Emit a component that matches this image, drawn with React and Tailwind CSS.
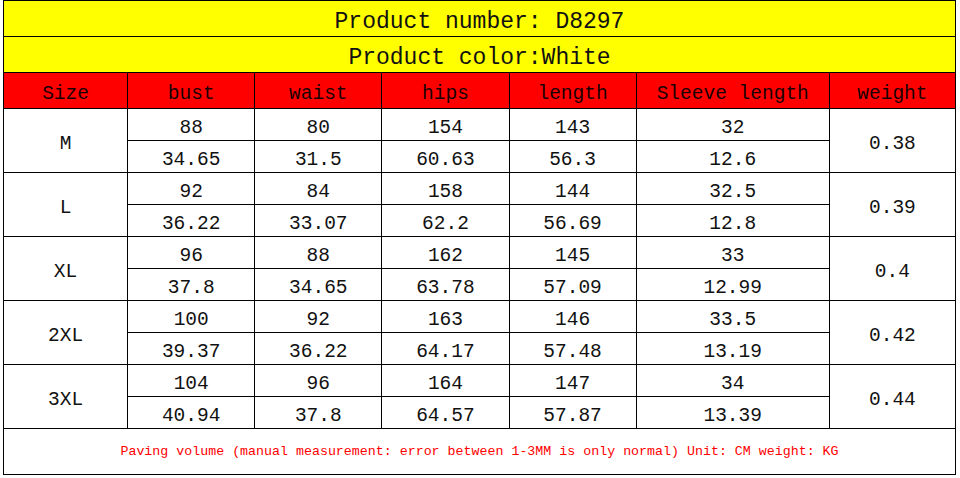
import React from "react";

const rows = [
  { size: "M", cm: ["88", "80", "154", "143", "32"], inch: ["34.65", "31.5", "60.63", "56.3", "12.6"], w: "0.38" },
  { size: "L", cm: ["92", "84", "158", "144", "32.5"], inch: ["36.22", "33.07", "62.2", "56.69", "12.8"], w: "0.39" },
  { size: "XL", cm: ["96", "88", "162", "145", "33"], inch: ["37.8", "34.65", "63.78", "57.09", "12.99"], w: "0.4" },
  { size: "2XL", cm: ["100", "92", "163", "146", "33.5"], inch: ["39.37", "36.22", "64.17", "57.48", "13.19"], w: "0.42" },
  { size: "3XL", cm: ["104", "96", "164", "147", "34"], inch: ["40.94", "37.8", "64.57", "57.87", "13.39"], w: "0.44" },
];

const headers = ["Size", "bust", "waist", "hips", "length", "Sleeve length", "weight"];

export default function App() {
  const font = { fontFamily: '"Liberation Mono", "Noto Sans CJK SC", monospace' };
  const cell = "border border-black text-center align-middle px-0 pb-0 pt-[8px] whitespace-nowrap leading-none";
  return (
    <div className="w-[960px] h-[478px] bg-white overflow-hidden pl-[3px]" style={font}>
      <table className="w-[953px] table-fixed border-collapse bg-white text-[#111]">
        <colgroup>
          <col className="w-[124px]" />
          <col className="w-[127px]" />
          <col className="w-[127px]" />
          <col className="w-[127px]" />
          <col className="w-[127px]" />
          <col className="w-[193px]" />
          <col className="w-[126px]" />
        </colgroup>
        <tbody>
          <tr className="h-[36px] bg-[#ffff00]">
            <td colSpan={7} className={`${cell} text-[23px]`}>Product number: D8297</td>
          </tr>
          <tr className="h-[36px] bg-[#ffff00]">
            <td colSpan={7} className={`${cell} text-[23px]`}>Product color:White</td>
          </tr>
          <tr className="h-[36px] bg-[#ff0000]">
            {headers.map((h) => (
              <td key={h} className={`${cell} text-[19.5px] text-[#1a0000]`}>{h}</td>
            ))}
          </tr>
          {rows.map((r) => (
            <React.Fragment key={r.size}>
              <tr className="h-[32px]">
                <td rowSpan={2} className={`${cell} text-[19.5px]`}>{r.size}</td>
                {r.cm.map((v, i) => (
                  <td key={i} className={`${cell} text-[19.5px]`}>{v}</td>
                ))}
                <td rowSpan={2} className={`${cell} text-[19.5px]`}>{r.w}</td>
              </tr>
              <tr className="h-[32px]">
                {r.inch.map((v, i) => (
                  <td key={i} className={`${cell} text-[19.5px]`}>{v}</td>
                ))}
              </tr>
            </React.Fragment>
          ))}
          <tr className="h-[46px]">
            <td colSpan={7} className="border border-black text-center align-middle p-0 whitespace-nowrap leading-none text-[13.3px] text-[#ff0000]">
              Paving volume (manual measurement: error between 1-3MM is only normal) Unit: CM weight: KG
            </td>
          </tr>
        </tbody>
      </table>
    </div>
  );
}
